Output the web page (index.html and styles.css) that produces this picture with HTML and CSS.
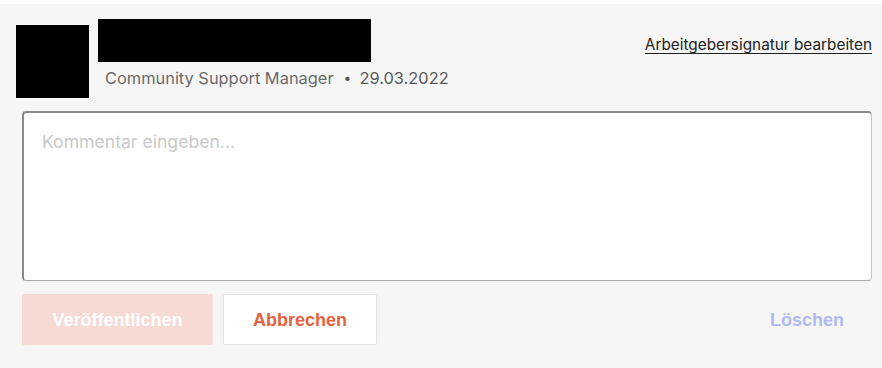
FILE: index.html
```html
<!DOCTYPE html>
<html lang="de">
<head>
<meta charset="utf-8">
<title>Kommentar</title>
<link rel="stylesheet" href="styles.css">
</head>
<body>
<div class="panel">
  <div class="header">
    <div class="avatar"></div>
    <div class="info">
      <div class="name"></div>
      <div class="meta"><span>Community Support Manager</span><span class="dot">•</span><span class="date">29.03.2022</span></div>
    </div>
    <a class="edit-link" href="#">Arbeitgebersignatur bearbeiten</a>
  </div>
  <textarea class="comment" placeholder="Kommentar eingeben..."></textarea>
  <div class="actions">
    <button class="btn btn-primary" disabled>Veröffentlichen</button>
    <button class="btn btn-secondary">Abbrechen</button>
    <button class="btn btn-delete" disabled>Löschen</button>
  </div>
</div>
</body>
</html>
```
FILE: styles.css
```css
html, body {
  margin: 0;
  padding: 0;
  background: #ffffff;
}
.panel {
  margin-top: 4px;
  height: 364px;
  box-sizing: border-box;
  background: #f6f6f6;
  padding: 0 10px 0 22px;
  font-family: Inter, "Noto Sans", sans-serif;
}
.header {
  display: flex;
  align-items: flex-start;
  margin-left: -6px;
  height: 107px;
}
.avatar {
  width: 73px;
  height: 73px;
  background: #000;
  margin-top: 21px;
  flex: none;
}
.info {
  margin-left: 9px;
  margin-top: 15px;
}
.name {
  width: 273px;
  height: 43px;
  background: #000;
}
.meta {
  margin-top: 6px;
  margin-left: 7px;
  font-size: 16.4px;
  line-height: 20px;
  color: #6b6b6b;
  display: flex;
  align-items: center;
}
.dot {
  margin: 0 8px 0 10px;
  font-size: 14px;
  color: #555;
}
.date {
  color: #5a5a5a;
}
.edit-link {
  margin-left: auto;
  margin-top: 32px;
  font-size: 15.35px;
  line-height: 18px;
  color: #222;
  text-decoration: underline;
  text-underline-offset: 3px;
}
.comment {
  display: block;
  width: 850px;
  height: 170px;
  box-sizing: border-box;
  margin: 0;
  border-style: solid;
  border-width: 2px 1px 1px 2px;
  border-color: #8a8a8a #c4c4c4 #a8a8a8 #8a8a8a;
  border-radius: 4px;
  background: #fff;
  padding: 17px 18px;
  font-family: Inter, "Noto Sans", sans-serif;
  font-size: 17.6px;
  line-height: 24px;
  resize: none;
  outline: none;
}
.comment::placeholder {
  color: #c9c9c9;
}
.actions {
  display: flex;
  gap: 10px;
  margin-top: 13px;
}
.btn {
  height: 51px;
  box-sizing: border-box;
  border-radius: 2px;
  font-family: "Liberation Sans", Arial, sans-serif;
  font-weight: bold;
  font-size: 18px;
  padding: 2px 0 0 0;
  cursor: pointer;
}
.btn-primary {
  width: 191px;
  background: #f8dad5;
  color: #fff;
  border: none;
}
.btn-secondary {
  width: 154px;
  background: #fff;
  color: #e4623d;
  border: 1px solid #e2e2e2;
}
.btn-delete {
  margin-left: auto;
  width: 130px;
  background: transparent;
  border: none;
  color: #b3b9f1;
  text-align: right;
  padding-right: 28px;
}
```
